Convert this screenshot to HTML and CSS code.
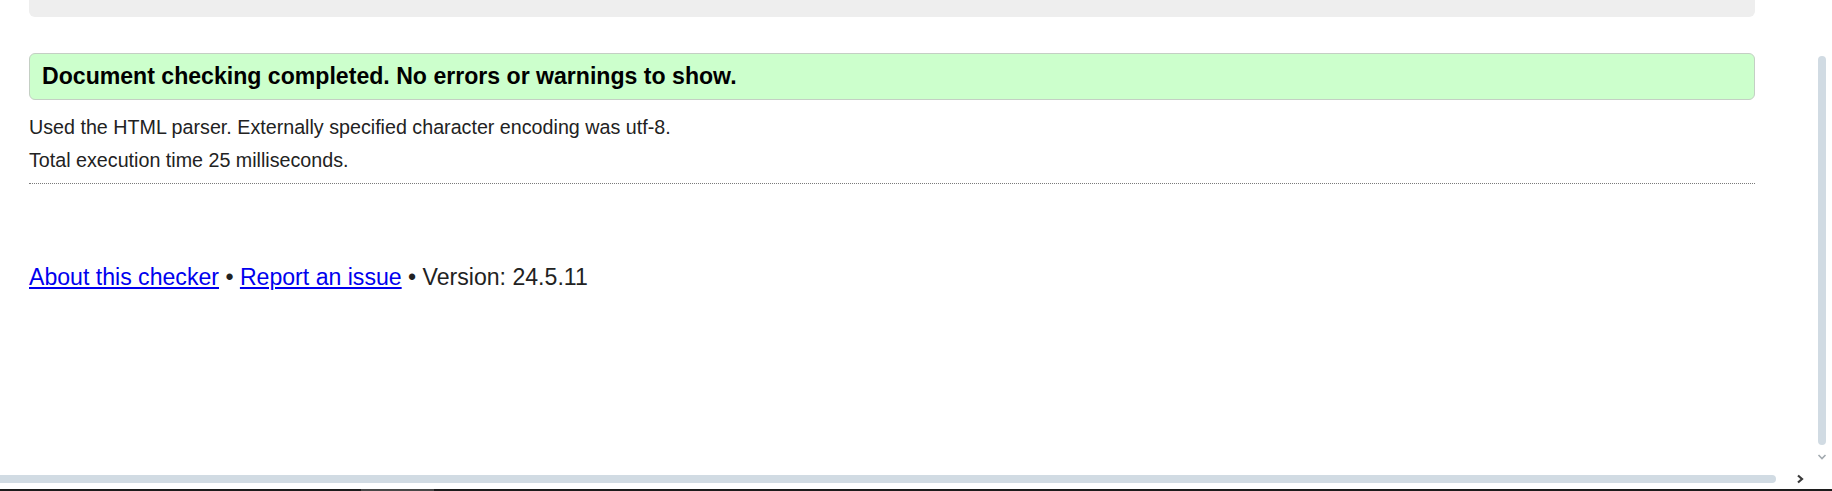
FILE: index.html
```html
<!DOCTYPE html>
<html lang="en">
<head>
<meta charset="utf-8">
<title>Nu Html Checker</title>
<link rel="stylesheet" href="styles.css">
</head>
<body>
<div class="page">
  <div class="source-box"></div>
  <div class="success"><h2 class="success-title">Document checking completed. No errors or warnings to show.</h2></div>
  <div class="stats">
    <p class="stat">Used the HTML parser. Externally specified character encoding was utf-8.</p>
    <p class="stat">Total execution time 25 milliseconds.</p>
  </div>
  <div class="rule"></div>
  <p class="footer"><a href="#">About this checker</a> • <a href="#">Report an issue</a> • Version: 24.5.11</p>
</div>

<div class="vscroll"></div>
<svg class="vscroll-arrow" width="10" height="8" viewBox="0 0 10 8"><polyline points="1.5,2 5,5.5 8.5,2" fill="none" stroke="#a3aab0" stroke-width="1.6"/></svg>
<div class="hscroll"></div>
<svg class="hscroll-arrow" width="10" height="10" viewBox="0 0 10 10"><polyline points="3,1.5 7,5 3,8.5" fill="none" stroke="#3a3a3a" stroke-width="2.2"/></svg>
<div class="taskbar"><div class="taskbar-seg"></div></div>
</body>
</html>
```

FILE: styles.css
```css
html, body {
  margin: 0;
  padding: 0;
  background: #ffffff;
  overflow: hidden;
}

body {
  font-family: "Liberation Sans", Arial, sans-serif;
  color: #222222;
  font-size: 19.7px;
}

.page {
  padding: 0 77px 0 29px;
}

.source-box {
  height: 17px;
  background: #eeeeee;
  border-radius: 0 0 6px 6px;
}

.success {
  margin-top: 36px;
  background: #ccffcc;
  border: 1px solid #c4cfc4;
  border-radius: 6px;
  padding: 9px 12px 10px 12px;
}

.success-title {
  margin: 0;
  font-size: 23.1px;
  line-height: 26px;
  font-weight: bold;
  color: #000000;
}

.stats {
  margin-top: 15px;
  display: flex;
  flex-direction: column;
  gap: 9px;
}

.stat {
  margin: 0;
  line-height: 24px;
}

.rule {
  margin-top: 10.5px;
  border-top: 1px dotted #7a7a7a;
}

.footer {
  margin: 79px 0 0 0;
  font-size: 23.1px;
  line-height: 28px;
}

.footer a {
  color: #0000ee;
}

.vscroll {
  position: fixed;
  left: 1818px;
  top: 56px;
  width: 8px;
  height: 389px;
  border-radius: 4px;
  background: #d1dbe3;
}

.vscroll-arrow {
  position: fixed;
  left: 1817px;
  top: 453px;
}

.hscroll {
  position: fixed;
  left: 0;
  top: 475px;
  width: 1776px;
  height: 8px;
  border-radius: 0 4px 4px 0;
  background: #d1dbe3;
}

.hscroll-arrow {
  position: fixed;
  left: 1795px;
  top: 474px;
}

.taskbar {
  position: fixed;
  left: 0;
  top: 489px;
  width: 100%;
  height: 2px;
  background: #1c1c1c;
}

.taskbar-seg {
  margin-left: 361px;
  width: 73px;
  height: 2px;
  background: #474747;
}
```
